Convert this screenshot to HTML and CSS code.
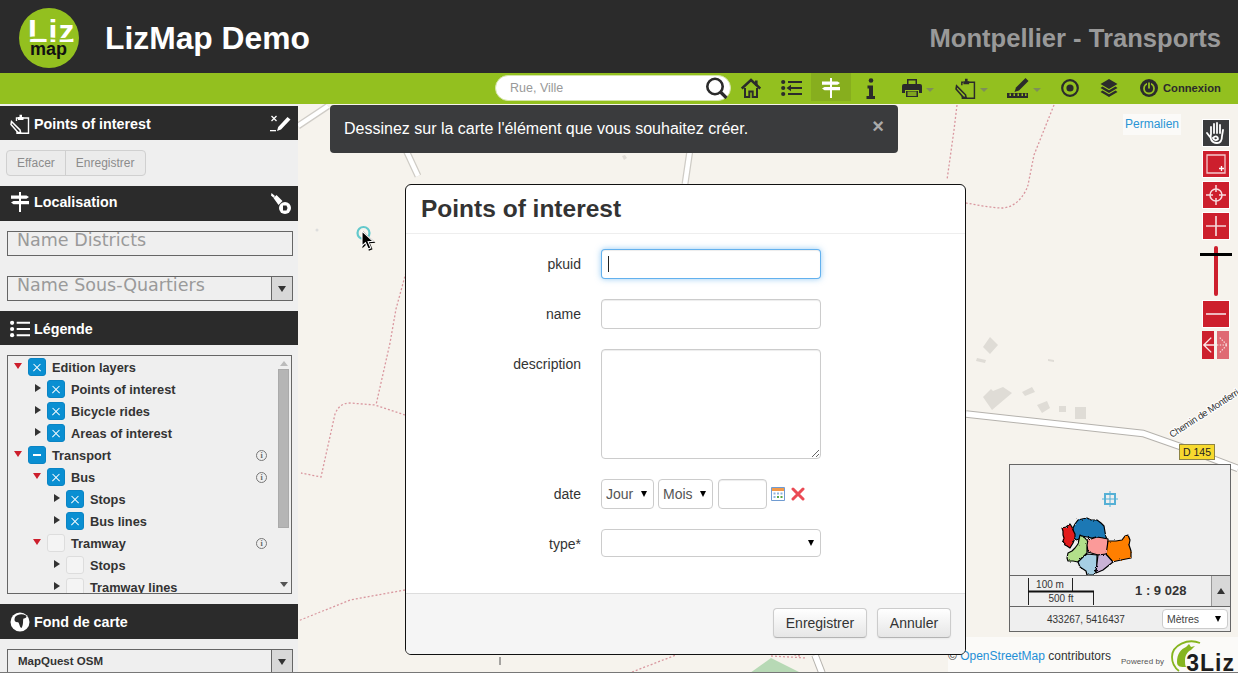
FILE: index.html
```html
<!DOCTYPE html>
<html lang="fr">
<head>
<meta charset="utf-8">
<title>LizMap Demo</title>
<link rel="stylesheet" href="styles.css">
</head>
<body>
<svg class="defs" width="0" height="0" aria-hidden="true">
  <symbol id="i-sign" viewBox="0 0 20 20">
    <path d="M9 0h2v20H9z"/><path d="M1 3.500h15.500l2.500 1.600-2.500 1.700H1zM3.500 9H19v3.300H3.500L1 10.600z"/>
  </symbol>
  <symbol id="i-list" viewBox="0 0 21 20">
    <circle cx="2.200" cy="3.500" r="2.200"/><circle cx="2.200" cy="10" r="2.200"/><circle cx="2.200" cy="16.500" r="2.200"/>
    <path d="M7 2.400h14v2.200H7zM7 8.900h14v2.200H7zM7 15.400h14v2.200H7z"/>
  </symbol>
  <symbol id="i-clip" viewBox="0 0 20 20">
    <path d="M8 4H6.500v3M12 4h6.500v15.200H7v-2" fill="none" stroke="currentColor" stroke-width="1.400"/>
    <path d="M8 5V3h1.500V.8h2.500V3h1.500v3H8z" fill="currentColor"/>
    <path d="M1.500 7.500L10 16l.7 3-3-.8L1 10.500z" fill="none" stroke="currentColor" stroke-width="1.500"/>
  </symbol>
</svg>

<header class="top">
  <div class="brand">
    <svg class="logo" viewBox="0 0 60 60" width="60" height="60">
      <circle cx="30" cy="30" r="30" fill="#93c01f"/>
      <text x="9" y="34" class="logo-liz">Liz</text>
      <path d="M8 29.500c10-3 25 2 45 0v1.500c-18 2-34-2-45 1z" fill="#93c01f"/>
      <text x="11" y="47" class="logo-map">map</text>
    </svg>
    <h1 class="title">LizMap Demo</h1>
  </div>
  <div class="project">Montpellier - Transports</div>
</header>

<nav class="nav">
  <div class="search">
    <span class="search-text">Rue, Ville</span>
    <svg class="search-icon" viewBox="0 0 23 22" width="23" height="22"><circle cx="10" cy="9.500" r="7.700" fill="none" stroke="#2b2b2b" stroke-width="2.600"/><path d="M15.500 15l6 6" stroke="#2b2b2b" stroke-width="3.200"/></svg>
  </div>
  <a class="nav-item w40"><svg viewBox="0 0 20 20" width="20" height="20"><path d="M.8 10.500L10 2l9.200 8.500" fill="none" stroke="#2b2b2b" stroke-width="2.400"/><path d="M14 2.500h2.600v5H14z" fill="#2b2b2b"/><path d="M4 10v9h4.300v-5.500h3.400V19H16v-9" fill="none" stroke="#2b2b2b" stroke-width="2"/></svg></a>
  <a class="nav-item w40"><svg viewBox="0 0 21 20" width="21" height="20" fill="#2b2b2b"><circle cx="2.200" cy="4" r="2.100"/><circle cx="2.200" cy="10" r="2.100"/><circle cx="2.200" cy="16" r="2.100"/><path d="M7 3h14v2H7zM10 9h11v2H10zM7 15h14v2H7zM5.500 10l4.500-3.200v6.400z"/></svg></a>
  <a class="nav-item w40 active"><svg class="white" width="20" height="20"><use href="#i-sign"/></svg></a>
  <a class="nav-item w40"><svg viewBox="0 0 10 21" width="10" height="21" fill="#2b2b2b"><circle cx="5" cy="2.500" r="2.300"/><path d="M1.500 7.500h5.500v10.500h2v3H.5v-3h2.500v-7.500H1.500z"/></svg></a>
  <a class="nav-item w53"><svg viewBox="0 0 20 20" width="20" height="20" fill="#2b2b2b"><path d="M5 1h10v6H5z"/><path d="M6.500 2.500h7V6h-7z" fill="#93c01f"/><path d="M2 6h16a2 2 0 0 1 2 2v7h-3v-3H3v3H0V8a2 2 0 0 1 2-2z"/><path d="M4 13h12v6H4z" fill="#2b2b2b"/><path d="M5.500 13.500h9v4.500h-9z" fill="#7fa51f"/></svg><i class="caret"></i></a>
  <a class="nav-item w54"><svg class="ink" width="21" height="21"><use href="#i-clip"/></svg><i class="caret"></i></a>
  <a class="nav-item w52"><svg viewBox="0 0 22 20" width="22" height="20" fill="#2b2b2b"><path d="M18.500 0l3 3-9.500 9.500-4.500 1.500 1.500-4.500z"/><path d="M0 15h21v5H0z"/><path d="M2.500 15.500h1.500v2.500H2.500zM6.500 15.500H8v2.500H6.500zM10.500 15.500H12v2.500h-1.500zM14.500 15.500H16v2.500h-1.500zM18 15.500h1.500v2.500H18z" fill="#93c01f"/></svg><i class="caret"></i></a>
  <a class="nav-item w40"><svg viewBox="0 0 18 18" width="18" height="18"><circle cx="9" cy="9" r="7.800" fill="none" stroke="#2b2b2b" stroke-width="2.200"/><circle cx="9" cy="9" r="3.600" fill="#2b2b2b"/></svg></a>
  <a class="nav-item w38"><svg viewBox="0 0 18 18" width="18" height="18" fill="#2b2b2b"><path d="M9 0l8.500 5L9 10 .5 5z"/><path d="M2.500 7.500L9 11.300l6.500-3.800 2 1.400L9 14 .5 8.900z"/><path d="M2.500 11.500L9 15.300l6.500-3.800 2 1.400L9 18 .5 12.900z"/></svg></a>
  <a class="nav-login"><svg viewBox="0 0 18 18" width="18" height="18"><circle cx="9" cy="9" r="9" fill="#2b2b2b"/><circle cx="9" cy="9.500" r="5" fill="none" stroke="#93c01f" stroke-width="1.800"/><path d="M9 3v7" stroke="#2b2b2b" stroke-width="4"/><path d="M9 3.500v6" stroke="#93c01f" stroke-width="1.800"/></svg><span>Connexion</span></a>
</nav>

<main class="main">
  <aside class="side">
    <section>
      <h2 class="bar">
        <svg class="bar-icon" width="20" height="20"><use href="#i-clip"/></svg>
        <span>Points of interest</span>
        <svg class="bar-end" viewBox="0 0 21 18" width="21" height="18" fill="#fff"><path d="M1.500 1l5 5M6.500 1l-5 5" stroke="#fff" stroke-width="1.300"/><path d="M0 15h6v1.300H0z"/><path d="M17.500 2l3 2.500-9.500 10-4 1.500 1.200-4z"/></svg>
      </h2>
      <div class="panel p-edit">
        <div class="btn-group"><span class="btn-s">Effacer</span><span class="btn-s">Enregistrer</span></div>
      </div>
    </section>
    <section>
      <h2 class="bar tall up">
        <svg class="bar-icon" width="20" height="20"><use href="#i-sign"/></svg>
        <span>Localisation</span>
        <svg class="bar-end brush" viewBox="0 0 21 21" width="21" height="21" fill="#fff"><path d="M1.500 0l3.500 3-1.500 1.800L1 2.500zM3.500 5l3-3 6 6-4 4z"/><circle cx="15" cy="15" r="6"/><path d="M13 12.500h3.500l1 2.500-1 2.500H13z" fill="#2b2b2b"/></svg>
      </h2>
      <div class="panel p-loc">
        <div class="combo"><span class="combo-text">Name Districts</span></div>
        <div class="combo"><span class="combo-text">Name Sous-Quartiers</span><span class="combo-btn"><i class="tri-down"></i></span></div>
      </div>
    </section>
    <section>
      <h2 class="bar">
        <svg class="bar-icon fill" width="20" height="20"><use href="#i-list"/></svg>
        <span>Légende</span>
      </h2>
      <div class="panel p-leg">
        <div class="tree">
          <ul class="rows">
            <li class="row l0"><i class="tog open"></i><b class="chk on"></b><span class="lab">Edition layers</span></li>
            <li class="row l1"><i class="tog"></i><b class="chk on"></b><span class="lab">Points of interest</span></li>
            <li class="row l1"><i class="tog"></i><b class="chk on"></b><span class="lab">Bicycle rides</span></li>
            <li class="row l1"><i class="tog"></i><b class="chk on"></b><span class="lab">Areas of interest</span></li>
            <li class="row l0"><i class="tog open"></i><b class="chk part"></b><span class="lab">Transport</span><em class="inf">i</em></li>
            <li class="row l1"><i class="tog open"></i><b class="chk on"></b><span class="lab">Bus</span><em class="inf">i</em></li>
            <li class="row l2"><i class="tog"></i><b class="chk on"></b><span class="lab">Stops</span></li>
            <li class="row l2"><i class="tog"></i><b class="chk on"></b><span class="lab">Bus lines</span></li>
            <li class="row l1"><i class="tog open"></i><b class="chk"></b><span class="lab">Tramway</span><em class="inf">i</em></li>
            <li class="row l2"><i class="tog"></i><b class="chk"></b><span class="lab">Stops</span></li>
            <li class="row l2"><i class="tog"></i><b class="chk"></b><span class="lab">Tramway lines</span></li>
          </ul>
          <div class="scroll"><i class="sc-up"></i><i class="sc-thumb"></i><i class="sc-down"></i></div>
        </div>
      </div>
    </section>
    <section>
      <h2 class="bar tall">
        <svg class="bar-icon" viewBox="0 0 20 20" width="20" height="20"><circle cx="10" cy="10" r="9.500" fill="#fff"/><path d="M5 5c3-3 7-3.500 11-1.500 1.500 2-1 3-2.500 3-1 2 .5 5-2 9.500-1.500 0-2-4-3-5.500-2-.5-4-.5-4-3 0-1 .5-2 .5-2.500z" fill="#2b2b2b"/></svg>
        <span>Fond de carte</span>
      </h2>
      <div class="panel p-base">
        <div class="combo base"><span class="base-text">MapQuest OSM</span><span class="combo-btn"><i class="tri-down"></i></span></div>
      </div>
    </section>
  </aside>

  <div class="map">
    <svg class="map-bg" viewBox="298 104 940 569" width="940" height="569">
      <rect x="298" y="104" width="940" height="569" fill="#f6f3ed"/>
      <g fill="#dfdcd6">
        <path d="M983 347l7-10 8 8-8 9zM977 358l9 2-1 3-9-2zM1048 359l6 1v2l-6-1zM1022 392l10-5 3 5-10 4zM1037 405l10-4 3 7-8 5zM1059 406h7v6h-7zM1075 407h11v12h-11z"/>
        <path d="M983 397l8-8 2 2 10-4 9 6-20 17z"/>
        <path d="M622 156l3-1 2 3-3 2z"/>
      </g>
      <circle cx="317" cy="230" r="1.500" fill="#ddd"/>
      <g fill="none" stroke="#cfccc6" stroke-width="7"><path d="M298 126l30-20M405 148l13 28M690 150l-5 34"/></g>
      <g fill="none" stroke="#fff" stroke-width="4.500"><path d="M298 126l30-20M405 148l13 28M690 150l-5 34"/></g>
      <g fill="none" stroke="#b5b2ad" stroke-width="7.500"><path d="M966 414l177 19.500 40 14 55 21"/><path d="M815 655l7 18"/></g>
      <g fill="none" stroke="#fff" stroke-width="5.500"><path d="M966 414l177 19.500 40 14 55 21"/><path d="M815 655l7 18"/></g>
      <path d="M750 673l21-15 30 15z" fill="#b7d9b5"/>
      <g fill="none" stroke="#d9979f" stroke-width="1.300" stroke-dasharray="2 2">
        <path d="M408 265l-12 44-6 34-14 62"/>
        <path d="M405 415l-30-10-25-2c-8 0-12 4-15 11l-14 63-20-4"/>
        <path d="M405 590l-55 10-52 21"/>
        <path d="M957 105l-3 25-7 50"/>
        <path d="M1054 105l-20 50-6 30c-3 10-12 22-25 23-12 0-25-3-37-5"/>
        <path d="M632 672l44-17M771 656l36 2M800 656l-12-3"/>
      </g>
      <path d="M500 657v8" stroke="#555" stroke-width="1"/>
      <text x="1172" y="438" transform="rotate(-33 1172 438)" class="road-label">Chemin de Montferri</text>
      <circle cx="363.500" cy="233" r="6" fill="none" stroke="#63c9cc" stroke-width="2.200"/>
    </svg>

    <a class="permalink">Permalien</a>

    <div class="road-badge">D 145</div>

    <div class="tools">
      <a class="tool dark"><svg viewBox="0 0 20 24" width="20" height="24" fill="none" stroke="#fff" stroke-width="1.800" stroke-linecap="round"><path d="M5 13V6M8 12V3M11 12V2M14 12V4M4 16l-3-4M5 13c-1 4 0 9 6 9 4 0 5-4 5-7l1-6M7 17c3-3 5-1 5 1-2 2-4 1-5-1z"/></svg></a>
      <a class="tool"><svg viewBox="0 0 20 20" width="20" height="20" fill="none" stroke="#f3c9cc" stroke-width="1.300"><path d="M1 1h18v18H1z"/><path d="M13 14.500h5M15.500 12v5" stroke="#fff"/></svg></a>
      <a class="tool"><svg viewBox="0 0 20 20" width="20" height="20" fill="none" stroke="#f6dcde" stroke-width="1.500"><circle cx="10" cy="10" r="6"/><path d="M0 10h7M13 10h7M10 0v7M10 13v7"/></svg></a>
      <a class="tool"><svg viewBox="0 0 20 20" width="20" height="20" stroke="#f3d5d8" stroke-width="1.700"><path d="M0 10h20M10 0v20"/></svg></a>
      <div class="slider"><i class="slider-rail"></i><i class="slider-handle"></i></div>
      <a class="tool"><svg viewBox="0 0 20 20" width="20" height="20" stroke="#f3d5d8" stroke-width="1.700"><path d="M0 10h20"/></svg></a>
      <div class="tool-pair">
        <a class="half"><svg viewBox="0 0 13 20" width="13" height="20" fill="none" stroke="#fbe9ea" stroke-width="1.500"><path d="M13 10H2M10 2l-8 8 8 8"/></svg></a>
        <a class="half off"><svg viewBox="0 0 13 20" width="13" height="20" fill="none" stroke="#fbe9ea" stroke-width="1.200" stroke-dasharray="1.500 1.500"><path d="M0 10h11M3 2l8 8-8 8"/></svg></a>
      </div>
    </div>

    <div class="overview">
      <svg class="ov-map" viewBox="0 0 221 110" width="221" height="110">
        <filter id="rough" x="-5%" y="-5%" width="110%" height="110%"><feTurbulence type="fractalNoise" baseFrequency=".45" numOctaves="2" seed="4"/><feDisplacementMap in="SourceGraphic" scale="2.500"/></filter>
        <g stroke="#000" stroke-width="1.200" stroke-linejoin="round" filter="url(#rough)">
          <path fill="#1f78b4" d="M63 63l2-4 3-4 4-1 5-1 4 2 6 0 4 3 3 3 1 6 1 5 1 2-6-1-5-1-4 1-5-1-5-1-3 3-3 1-3-2z"/>
          <path fill="#e31a1c" d="M52 63l4-1 4-3 2 3 1 3 2 4 0 4-2 5-3 5-3-2-2-1-2-4 1-3-1-3 0-4z"/>
          <path fill="#b2df8a" d="M70 70l5 3 3 4-1 6 0 5-5 5-4 4-5-1-5 0-1-3 1-5 4-2 3-3 3-4z"/>
          <path fill="#fb9a99" d="M78 75l9-3 6 1 5 1 0 8-1 8-9 0-10-3-1-7z"/>
          <path fill="#ff7f00" d="M98 76l8 0 6-1 3-4 3-1 2 5-1 5 2 6 0 7-10 2-9 2-6-7 1-7z"/>
          <path fill="#a6cee3" d="M68 97l5-5 4-3 10 1 0 12-3 8h-7l-1-4-6-4z"/>
          <path fill="#cab2d6" d="M88 90l8-1 7 8-10 8-7 3 1-10z"/>
        </g>
        <g fill="none" stroke="#55b0d5" stroke-width="2"><path d="M95 29h10v10H95z"/><path d="M100 26v16M92 34h16" stroke-width="1"/></g>
      </svg>
      <div class="ov-scale">
        <svg class="scale-bar" viewBox="0 0 90 30" width="90" height="30">
          <path d="M8.500 2v13M52.500 2v13M8.500 15v14M73.500 15v14" stroke="#222" stroke-width="1" fill="none"/>
          <path d="M8 14.500h66v2H8z" fill="#111"/>
          <text x="30" y="12" class="scale-txt" text-anchor="middle">100 m</text>
          <text x="41" y="25.500" class="scale-txt" text-anchor="middle">500 ft</text>
        </svg>
        <div class="scale-num">1 : 9 028</div>
        <div class="ov-btn"><i class="tri-up"></i></div>
      </div>
      <div class="ov-coords">
        <span class="coords">433267, 5416437</span>
        <select class="unit"><option>Mètres</option></select>
      </div>
    </div>

    <div class="attrib">
      <span class="osm">© <a>OpenStreetMap</a> contributors</span>
      <span class="powered">Powered by</span>
      <span class="liz3">
        <svg class="gecko" viewBox="0 0 34 34" width="34" height="34"><path d="M30 4C18-1 2 6 2 18c0 6 3 11 7 14" fill="none" stroke="#86b51f" stroke-width="1.800"/><path d="M7 23c0-8 4-13 9-15l3-3 2 3 4-1-4 4c-4 2-6 6-6 10 0 3 0 5 1 7-5 0-9 0-9-5z" fill="#86b51f"/></svg>
        <b>3Liz</b>
      </span>
    </div>

    <div class="alert">
      <span>Dessinez sur la carte l'élément que vous souhaitez créer.</span>
      <span class="alert-x">×</span>
    </div>

    <div class="modal">
      <h3 class="modal-title">Points of interest</h3>
      <form class="modal-body">
        <div class="field"><label class="lbl">pkuid</label><span class="focus-wrap"><input class="inp focus" type="text"><i class="text-caret"></i></span></div>
        <div class="field"><label class="lbl">name</label><input class="inp" type="text"></div>
        <div class="field area"><label class="lbl">description</label><textarea class="inp txt"></textarea></div>
        <div class="field"><label class="lbl">date</label>
          <div class="date">
            <select class="sel jour"><option>Jour</option></select>
            <select class="sel mois"><option>Mois</option></select>
            <input class="inp year" type="text">
            <svg class="cal" viewBox="0 0 14 14" width="14" height="14"><path d="M.5.500h13v13H.5z" fill="#fff" stroke="#6f9bd1"/><path d="M1 1h12v3H1z" fill="#f2994a"/><path d="M2.500 5.500h2v2h-2zM6 5.500h2v2H6zM9.500 5.500h2v2h-2zM2.500 9h2v2h-2z" fill="#8fb3dc"/><path d="M6 9h2v2H6zM9.500 9h2v2h-2z" fill="#5aa84a"/></svg>
            <svg class="del" viewBox="0 0 14 14" width="14" height="14"><path d="M2 2l10 10M12 2L2 12" stroke="#ea4a54" stroke-width="3" stroke-linecap="round"/></svg>
          </div>
        </div>
        <div class="field last"><label class="lbl">type*</label><select class="sel wide"><option></option></select></div>
      </form>
      <div class="modal-foot">
        <button class="btn save" type="button">Enregistrer</button>
        <button class="btn cancel" type="button">Annuler</button>
      </div>
    </div>

    <svg class="pointer" viewBox="0 0 14 21" width="14" height="21"><path d="M1 1v15l3.500-3.300 2.700 6.300 2.600-1.100-2.700-6.200 5-.3z" fill="#000" stroke="#fff" stroke-width="1.100"/></svg>
  </div>
</main>
<div class="edge"></div>
</body>
</html>
```
FILE: styles.css
```css
* { box-sizing: border-box; }
html, body { margin: 0; padding: 0; }
body {
  width: 1238px; height: 673px; overflow: hidden;
  font-family: "Liberation Sans", Arial, sans-serif;
  font-size: 14px; color: #333; background: #efefef;
}
.defs { position: absolute; }
a { text-decoration: none; }
ul { list-style: none; margin: 0; padding: 0; }

.top {
  height: 73px; background: #2b2b2b;
  display: flex; align-items: center; justify-content: space-between;
  padding: 0 17px 0 19px;
}
.brand { display: flex; align-items: center; gap: 26px; }
.logo { display: block; margin-top: 2px; }
.logo-liz { font: bold 32px "Liberation Sans", sans-serif; fill: #fff; letter-spacing: 1px; }
.logo-map { font: bold 18px "Liberation Sans", sans-serif; fill: #111; }
.title { margin: 2px 0 0; font-size: 31.800px; font-weight: bold; color: #fff; line-height: 38px; }
.project { font-size: 25.600px; font-weight: bold; color: #999; margin-top: 3px; }

.nav {
  height: 31px; background: #93c01f;
  display: flex; align-items: flex-start; padding-left: 495px;
}
.search {
  width: 236px; height: 26px; margin-top: 2px;
  background: #fff; border-radius: 13px; border: 1px solid #d5e5a8;
  display: flex; align-items: center; justify-content: space-between;
  padding: 0 2px 0 14px;
}
.search-text { font-size: 12.500px; color: #999; }
.nav-item {
  height: 28px; display: flex; align-items: center; justify-content: center; gap: 4px;
}
.nav-item svg { display: block; margin-top: 2px; }
.w40 { width: 40px; }
.w38 { width: 38px; }
.w52 { width: 52px; }
.w53 { width: 53px; }
.w54 { width: 54px; }
.active { background: #87ae1e; }
.white { fill: #fff; }
.ink { color: #2b2b2b; }
.caret {
  width: 0; height: 0; margin-top: 5px;
  border: 4px solid transparent; border-top-color: #7e8f58; border-bottom: 0;
}
.nav-login {
  display: flex; align-items: center; gap: 5px; height: 28px; padding-left: 12px;
  font-size: 11.200px; font-weight: bold; color: #2b2b2b;
}
.nav-login svg { margin-top: 2px; }
.nav-login span { margin-top: 2px; }

.main { display: flex; height: 568px; }
.side { width: 298px; flex: none; padding-top: 2px; background: #efefef; overflow: hidden; }
.bar {
  margin: 0; height: 34px; background: #2b2b2b; color: #fff;
  display: flex; align-items: center; padding: 2px 7px 0 10px; gap: 4px;
  font-size: 14.300px; font-weight: bold;
}
.bar.tall { height: 35px; padding-top: 0; }
.bar.up { padding-bottom: 4px; }
.bar-icon { color: #fff; fill: #fff; flex: none; display: block; }
.bar-end { margin-left: auto; display: block; }
.brush { margin-top: 4px; }
.panel { padding-left: 7px; }
.p-edit { height: 46px; padding: 10px 0 0 6px; }
.btn-group { display: inline-flex; border: 1px solid #d0d0d0; border-radius: 4px; background: #ebebeb; height: 26px; }
.btn-s { padding: 0 10px; line-height: 24px; font-size: 12px; color: #8c8c8c; }
.btn-s + .btn-s { border-left: 1px solid #cfcfcf; }
.p-loc { height: 90px; padding-top: 10px; }
.combo {
  width: 286px; height: 25px; border: 1px solid #666; margin-bottom: 20px;
  display: flex; justify-content: space-between;
}
.combo-text { font-family: "DejaVu Sans", sans-serif; font-size: 17.500px; line-height: 17px; color: #9a9a9a; padding-left: 9px; }
.combo-btn { width: 21px; background: #d8d8d8; border-left: 1px solid #666; display: flex; align-items: center; justify-content: center; }
.tri-down { width: 0; height: 0; border: 4.500px solid transparent; border-top: 6px solid #333; border-bottom: 0; }
.tri-up { width: 0; height: 0; border: 4.500px solid transparent; border-bottom: 6px solid #333; border-top: 0; }
.p-leg { height: 259px; padding-top: 10px; }
.tree { width: 285px; height: 239px; border: 1px solid #666; display: flex; }
.rows { flex: 1; overflow: hidden; }
.row { height: 22px; display: flex; align-items: center; font-size: 12.800px; font-weight: bold; color: #333; padding-right: 9px; }
.l1 { padding-left: 19px; }
.l2 { padding-left: 38px; }
.tog {
  width: 20px; flex: none; height: 10px;
  display: flex; align-items: center; justify-content: center;
}
.tog::before {
  content: ""; width: 0; height: 0;
  border: 4px solid transparent; border-left: 6px solid #333; border-right: 0;
  margin-left: 1px; margin-top: -2px;
}
.tog.open::before {
  border: 4px solid transparent; border-top: 6px solid #cd1f2d; border-bottom: 0;
  margin-left: -1px; margin-top: -2px;
}
.chk {
  width: 18px; height: 18px; flex: none; margin-right: 6px; border-radius: 3px;
  background: #f4f4f4; border: 1px solid #ddd; position: relative;
}
.chk.on, .chk.part { background: #0a8fd2; border-color: #0a84c4; }
.chk.on::before, .chk.on::after {
  content: ""; position: absolute; left: 3px; top: 7.500px; width: 10px; height: 1.300px; background: #fff;
  transform: rotate(45deg);
}
.chk.on::after { transform: rotate(-45deg); }
.chk.part::before { content: ""; position: absolute; left: 4px; top: 7px; width: 8px; height: 2px; background: #fff; }
.inf {
  margin-left: auto; width: 11px; height: 11px; border: 1px solid #777; border-radius: 50%;
  font: bold 8px/9px "Liberation Serif", serif; text-align: center; color: #666;
}
.scroll { width: 15px; flex: none; display: flex; flex-direction: column; align-items: center; padding-top: 5px; }
.sc-up { width: 0; height: 0; border: 4px solid transparent; border-bottom: 5px solid #bbb; border-top: 0; }
.sc-thumb { width: 11px; height: 159px; margin-top: 3px; background: #b5b5b5; border: 1px solid #aaa; }
.sc-down { width: 0; height: 0; margin-top: 54px; border: 4px solid transparent; border-top: 5px solid #555; border-bottom: 0; }
.p-base { padding-top: 10px; }
.base { height: 26px; align-items: stretch; margin: 0; }
.base-text { font-size: 11.500px; font-weight: bold; color: #333; padding-left: 10px; line-height: 22px; }

.map { position: relative; width: 940px; height: 568px; overflow: hidden; }
.map-bg { position: absolute; left: 0; top: 0; display: block; }
.road-label { font: 9.500px "Liberation Sans", sans-serif; letter-spacing: -.3px; fill: #333; stroke: #fff; stroke-width: 2px; paint-order: stroke; }
.permalink {
  position: absolute; left: 825px; top: 10px; width: 58px; height: 21px;
  background: rgba(255, 255, 255, .6); color: #2a95d5; font-size: 12px; line-height: 21px; text-align: center;
}
.road-badge {
  position: absolute; left: 881px; top: 340px; width: 36px; height: 16px;
  background: #f7d92e; border: 1px solid #8d8344; font-size: 10.500px; line-height: 14px; text-align: center; color: #222;
}
.tools { position: absolute; left: 904px; top: 15px; width: 28px; display: flex; flex-direction: column; gap: 3px; }
.tool {
  background: #cd1f2d; border: 1px solid #fff;
  display: flex; align-items: center; justify-content: center;
  box-sizing: content-box; width: 26px; height: 26px;
}
.tool.dark { background: #3a3b3d; }
.slider { height: 53px; margin: 1px 0 0; position: relative; display: flex; justify-content: center; padding-top: 2px; }
.slider-rail { width: 4px; height: 50px; background: #cd1f2d; border-radius: 2px; }
.slider-handle { position: absolute; left: -2px; top: 9px; width: 32px; height: 3px; background: #000; }
.tool-pair { display: flex; gap: 3px; }
.half { width: 12px; height: 28px; background: #cd1f2d; display: flex; align-items: center; justify-content: center; overflow: hidden; }
.half.off { background: #df6a73; }

.overview {
  position: absolute; left: 711px; top: 360px; width: 222px; height: 168px;
  border: 1px solid #666; background: #efefef; display: flex; flex-direction: column;
}
.ov-map { display: block; flex: none; }
.ov-scale { height: 32px; border-top: 1px solid #666; border-bottom: 1px solid #666; display: flex; align-items: stretch; }
.scale-bar { display: block; margin-left: 10px; flex: none; }
.scale-txt { font: 10px "Liberation Sans", sans-serif; fill: #333; }
.scale-num { width: 110px; text-align: center; font-size: 13px; font-weight: bold; line-height: 30px; color: #333; }
.ov-btn { width: 20px; margin-left: auto; background: #d8d8d8; border-left: 1px solid #999; display: flex; align-items: center; justify-content: center; }
.ov-coords { flex: 1; display: flex; align-items: center; justify-content: space-between; padding: 0 2px 0 37px; }
.coords { font-size: 10px; color: #333; }
.sel, .unit {
  appearance: none;
  background: #fff url("data:image/svg+xml,%3Csvg xmlns='http://www.w3.org/2000/svg' width='8' height='6'%3E%3Cpath d='M1 0h6L4 6z' fill='%23000'/%3E%3C/svg%3E") no-repeat;
}
.unit {
  width: 66px; height: 20px; font: 10.500px "Liberation Sans", sans-serif; color: #444;
  border: 1px solid #ccc; border-radius: 4px; padding: 0 0 0 4px; background-position: right 5px center;
}

.attrib {
  position: absolute; left: 650px; top: 533px; width: 290px; height: 35px;
  background: rgba(255, 255, 255, .6);
  display: flex; align-items: flex-end;
}
.osm { font-size: 12px; color: #333; margin-bottom: 9px; white-space: nowrap; }
.osm a { color: #1f8fd6; }
.powered { font-size: 8px; color: #555; margin: 0 0 6px 10px; white-space: nowrap; letter-spacing: .1px; }
.liz3 { position: relative; margin-left: 6px; width: 68px; height: 33px; flex: none; }
.gecko { display: block; }
.liz3 b { position: absolute; left: 16px; bottom: 0; font-size: 23px; line-height: 18px; color: #1d1d1d; letter-spacing: 1px; }

.alert {
  position: absolute; left: 32px; top: 1px; width: 568px; height: 48px;
  background: #3a3b3d; border-radius: 4px; color: #fff; font-size: 16px;
  display: flex; align-items: center; justify-content: space-between; padding: 0 14px;
}
.alert-x { font-size: 20px; font-weight: bold; color: #aaa; margin-top: -5px; }

.modal {
  position: absolute; left: 107px; top: 80px; width: 561px; height: 471px;
  background: #fff; border: 1px solid #111; border-radius: 6px; overflow: hidden;
  display: flex; flex-direction: column;
}
.modal-title {
  margin: 0; height: 49px; padding-left: 15px; border-bottom: 1px solid #eee;
  font-size: 24.500px; font-weight: bold; line-height: 47px; color: #333; flex: none;
}
.modal-body { flex: 1; padding-top: 15px; }
.field { display: flex; align-items: flex-start; margin-bottom: 20px; }
.lbl { width: 175px; text-align: right; line-height: 30px; margin-right: 20px; font-size: 14px; color: #333; flex: none; }
.inp {
  display: block; width: 220px; height: 30px; margin: 0; padding: 4px 6px;
  border: 1px solid #ccc; border-radius: 4px; background: #fff; outline: 0;
  box-shadow: inset 0 1px 1px rgba(0, 0, 0, .075); font: 14px "Liberation Sans", sans-serif;
}
.focus-wrap { position: relative; display: block; }
.inp.focus { border-color: rgba(82, 168, 236, .9); box-shadow: inset 0 1px 1px rgba(0, 0, 0, .075), 0 0 6px rgba(82, 168, 236, .6); }
.text-caret { position: absolute; left: 7px; top: 7px; width: 1px; height: 16px; background: #222; }
.txt { height: 110px; resize: vertical; }
.date { display: flex; align-items: center; }
.sel {
  height: 30px; border: 1px solid #ccc; border-radius: 4px;
  font: 14px "Liberation Sans", sans-serif; color: #555; padding: 0 0 0 4px; margin: 0;
  background-position: right 5px center;
}
.jour { width: 53px; margin-right: 4px; }
.mois { width: 55px; margin-right: 5px; }
.year { width: 49px; }
.cal { display: block; margin-left: 4px; }
.del { display: block; margin-left: 6px; }
.wide { width: 220px; height: 28px; }
.field.last { margin-bottom: 0; }
.modal-foot {
  height: 61px; flex: none; background: #f5f5f5; border-top: 1px solid #ddd;
  display: flex; justify-content: flex-end; align-items: flex-start; gap: 10px; padding: 14px 14px 0 0;
}
.btn {
  height: 30px; padding: 0; text-align: center; font: 14px "Liberation Sans", sans-serif; color: #333;
  border: 1px solid #ccc; border-bottom-color: #b3b3b3; border-radius: 4px;
  background: linear-gradient(#fff, #e6e6e6);
  box-shadow: 0 1px 2px rgba(0, 0, 0, .05);
}
.save { width: 94px; }
.cancel { width: 74px; }
.pointer { position: absolute; left: 63px; top: 126px; display: block; filter: drop-shadow(1px 1px 0 #000); }
.edge { height: 1px; background: #777; }
```
